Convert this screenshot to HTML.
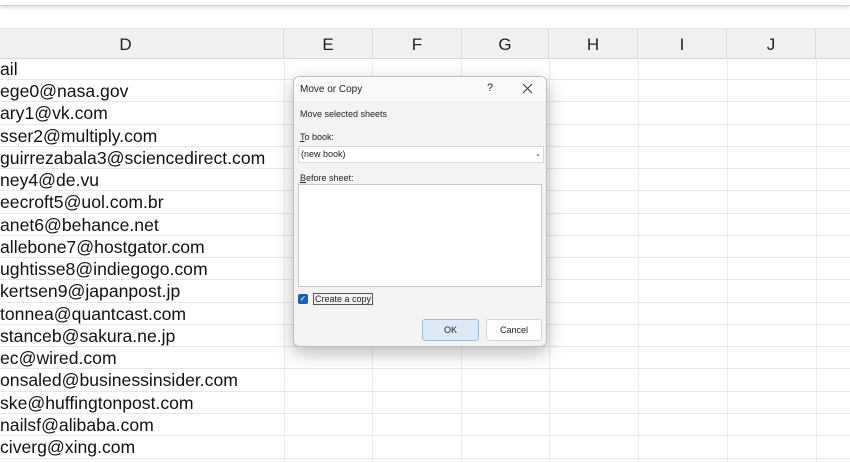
<!DOCTYPE html>
<html><head><style>
body{margin:0;width:850px;height:462px;overflow:hidden;background:#fff;font-family:"Liberation Sans",Arial,sans-serif;position:relative}
.top{position:absolute;left:0;top:0;width:850px;height:5px;background:#fff;border-bottom:1px solid #d4d4d4;box-shadow:0 2px 3px rgba(0,0,0,.12)}
.hdr{position:absolute;left:0;top:28px;width:850px;height:29px;background:#f0f0f0;border-bottom:1px solid #d8d8d8;border-top:1px solid #e4e4e4}
.hc{position:absolute;top:0;height:29px;line-height:32px;text-align:center;font-size:17px;color:#222;border-right:1px solid #dadada}
.vl{position:absolute;top:57px;bottom:0;width:1px;background:#ececec}
.hl{position:absolute;left:0;width:850px;height:1px;background:#e6e6e6}
.cell{position:absolute;left:0;font-size:17.6px;color:#111;line-height:22px}
.dlg{position:absolute;left:293px;top:76px;width:252px;height:269px;background:#f3f3f3;border:1px solid #bdbdbd;border-radius:6px;box-shadow:0 6px 18px rgba(0,0,0,.28);font-size:9px;color:#222;overflow:hidden}
.tb{height:24px;background:#fafafa;position:relative}
.d{position:absolute}
u{text-decoration:underline}
</style></head><body>
<div class="top"></div>
<div class="hdr">
<div class="hc" style="left:-32px;width:315px">D</div>
<div class="hc" style="left:284px;width:88px">E</div>
<div class="hc" style="left:373px;width:88px">F</div>
<div class="hc" style="left:462px;width:86px">G</div>
<div class="hc" style="left:549px;width:88px">H</div>
<div class="hc" style="left:638px;width:88px">I</div>
<div class="hc" style="left:727px;width:88px">J</div>
</div>
<div class="vl" style="left:284px"></div><div class="vl" style="left:372px"></div><div class="vl" style="left:461px"></div><div class="vl" style="left:549px"></div><div class="vl" style="left:638px"></div><div class="vl" style="left:727px"></div><div class="vl" style="left:816px"></div>
<div class="hl" style="top:79px"></div><div class="hl" style="top:101px"></div><div class="hl" style="top:124px"></div><div class="hl" style="top:146px"></div><div class="hl" style="top:168px"></div><div class="hl" style="top:190px"></div><div class="hl" style="top:213px"></div><div class="hl" style="top:235px"></div><div class="hl" style="top:257px"></div><div class="hl" style="top:279px"></div><div class="hl" style="top:302px"></div><div class="hl" style="top:324px"></div><div class="hl" style="top:346px"></div><div class="hl" style="top:368px"></div><div class="hl" style="top:391px"></div><div class="hl" style="top:413px"></div><div class="hl" style="top:435px"></div><div class="hl" style="top:458px"></div>
<div class="cell" style="top:58px">ail</div>
<div class="cell" style="top:80px">ege0@nasa.gov</div>
<div class="cell" style="top:102px">ary1@vk.com</div>
<div class="cell" style="top:125px">sser2@multiply.com</div>
<div class="cell" style="top:147px">guirrezabala3@sciencedirect.com</div>
<div class="cell" style="top:169px">ney4@de.vu</div>
<div class="cell" style="top:191px">eecroft5@uol.com.br</div>
<div class="cell" style="top:214px">anet6@behance.net</div>
<div class="cell" style="top:236px">allebone7@hostgator.com</div>
<div class="cell" style="top:258px">ughtisse8@indiegogo.com</div>
<div class="cell" style="top:280px">kertsen9@japanpost.jp</div>
<div class="cell" style="top:303px">tonnea@quantcast.com</div>
<div class="cell" style="top:325px">stanceb@sakura.ne.jp</div>
<div class="cell" style="top:347px">ec@wired.com</div>
<div class="cell" style="top:369px">onsaled@businessinsider.com</div>
<div class="cell" style="top:392px">ske@huffingtonpost.com</div>
<div class="cell" style="top:414px">nailsf@alibaba.com</div>
<div class="cell" style="top:436px">civerg@xing.com</div>

<div class="dlg">
<div class="tb"><span class="d" style="left:6px;top:7px;font-size:10px">Move or Copy</span><span class="d" style="left:193px;top:5px;font-size:11px">?</span><svg class="d" style="left:228px;top:6px" width="11" height="11"><path d="M1 1L10 10M10 1L1 10" stroke="#333" stroke-width="1"/></svg></div>
<div class="d" style="left:6px;top:32px">Move selected sheets</div>
<div class="d" style="left:6px;top:55px"><u>T</u>o book:</div>
<div class="d" style="left:4px;top:69px;width:244px;height:15px;background:#fff;border:1px solid #d8d8d8;line-height:15px"><span style="margin-left:2px">(new book)</span><span style="position:absolute;right:2px;font-size:7px">⌄</span></div>
<div class="d" style="left:6px;top:96px"><u>B</u>efore sheet:</div>
<div class="d" style="left:4px;top:107px;width:242px;height:101px;background:#fff;border:1px solid #c8c8c8"></div>
<div class="d" style="left:4px;top:217px;width:10px;height:10px;background:#1a5fb4;border-radius:2px;color:#fff;font-size:8px;line-height:10px;text-align:center">✓</div>
<div class="d" style="left:19px;top:216px;border:1px solid #555;padding:0 1px">Create a copy</div>
<div class="d" style="left:128px;top:242px;width:55px;height:20px;background:#dde9f5;border:1px solid #9dbbd8;border-radius:3px;text-align:center;line-height:20px">OK</div>
<div class="d" style="left:192px;top:242px;width:54px;height:20px;background:#fdfdfd;border:1px solid #d4d4d4;border-radius:3px;text-align:center;line-height:20px">Cancel</div>
</div>
</body></html>
